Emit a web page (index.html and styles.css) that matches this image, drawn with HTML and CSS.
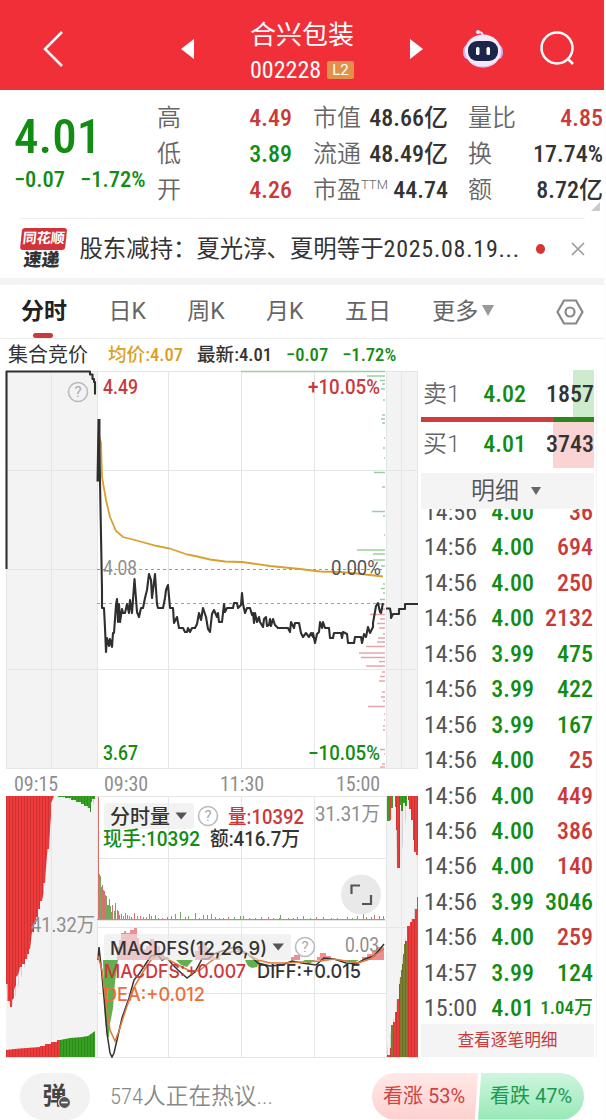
FILE: index.html
```html
<!DOCTYPE html>
<html lang="zh-CN">
<head>
    <meta charset="UTF-8">
    <title>合兴包装 002228</title>
    <link rel="stylesheet" href="styles.css">
</head>
<body>
<div class="app">
    <header class="topbar">
        <svg class="back" width="24" height="38" viewBox="0 0 24 38"><path d="M21 2L4 19L21 36"/></svg>
        <svg class="prev" width="14" height="20" viewBox="0 0 14 20"><path d="M0 10L13 0V20Z"/></svg>
        <div class="stock">
            <h1>合兴包装</h1>
            <p><span class="num">002228</span><b>L2</b></p>
        </div>
        <svg class="next" width="14" height="20" viewBox="0 0 14 20"><path d="M13 10L0 0V20Z"/></svg>
        <svg class="robot" width="42" height="40" viewBox="0 0 42 40">
            <path d="M21 8Q21 3 17 3" fill="none" stroke="#f6dcf0" stroke-width="2"/>
            <circle cx="16" cy="3" r="2" fill="#f6e9fb"/>
            <ellipse cx="5" cy="23" rx="4" ry="7" fill="#c9b4f3"/>
            <ellipse cx="37" cy="23" rx="4" ry="7" fill="#c9b4f3"/>
            <ellipse cx="21" cy="22" rx="18" ry="16.5" fill="#f3eafc"/>
            <path d="M8 32Q21 43 34 32Q28 38 21 38T8 32" fill="#c3a5ee"/>
            <rect x="6" y="12" width="30" height="20" rx="9" fill="#1c2649"/>
            <rect x="14" y="18" width="3.500" height="8" rx="1.500" fill="#fff"/>
            <rect x="24.500" y="18" width="3.500" height="8" rx="1.500" fill="#fff"/>
        </svg>
        <svg class="search" width="36" height="36" viewBox="0 0 36 36"><circle cx="17" cy="17" r="15.500"/><path d="M28 28L33 33"/></svg>
    </header>

    <section class="quote">
        <div class="price">
            <strong class="num">4.01</strong>
            <p><span class="num">−0.07</span><span class="num">−1.72%</span></p>
        </div>
        <dl class="col1">
            <div><dt>高</dt><dd class="num red">4.49</dd></div>
            <div><dt>低</dt><dd class="num green">3.89</dd></div>
            <div><dt>开</dt><dd class="num red">4.26</dd></div>
        </dl>
        <dl class="col2">
            <div><dt>市值</dt><dd class="num">48.66亿</dd></div>
            <div><dt>流通</dt><dd class="num">48.49亿</dd></div>
            <div><dt>市盈<sup>TTM</sup></dt><dd class="num">44.74</dd></div>
        </dl>
        <dl class="col3">
            <div><dt>量比</dt><dd class="num red">4.85</dd></div>
            <div><dt>换</dt><dd class="num">17.74%</dd></div>
            <div><dt>额</dt><dd class="num">8.72亿</dd></div>
        </dl>
        <i class="corner"></i>
    </section>

    <section class="news">
        <div class="tag"><span>同花顺</span><em>速递</em></div>
        <p>股东减持：夏光淳、夏明等于<span class="num">2025.08.19...</span></p>
        <i class="dot"></i>
        <svg width="14" height="14" viewBox="0 0 14 14"><path d="M1 1L13 13M13 1L1 13"/></svg>
    </section>

    <nav class="tabs">
        <a class="active">分时</a>
        <a>日K</a>
        <a>周K</a>
        <a>月K</a>
        <a>五日</a>
        <a>更多<svg width="12" height="11" viewBox="0 0 12 11"><path d="M0 0H12L6 11Z" fill="#999"/></svg></a>
        <svg class="gear" width="28" height="26" viewBox="0 0 28 26"><path d="M8 1.500H20L26.500 13L20 24.500H8L1.500 13Z"/><circle cx="14" cy="13" r="4.500"/></svg>
    </nav>

    <div class="info">
        <b>集合竞价</b>
        <span class="avg">均价:4.07</span>
        <span>最新:4.01</span>
        <span class="green">−0.07</span>
        <span class="green">−1.72%</span>
    </div>

    <main class="board">
        <div class="charts">
            <svg width="418" height="399" viewBox="0 370 418 399">
                <path class="shade" d="M6 371H97V769H6ZM386 371H418V769H386Z"/>
                <path class="grid" d="M6 371.500H418M6 470.500H418M6 569.500H97M6 669.500H418M6 768.500H418M6.500 371V769M51.500 371V769M97.500 371V769M168.500 371V769M241.500 371V769M314.500 371V769M386.500 371V769M401.500 371V769M417.500 371V769"/>
                <path class="dash" d="M97 569.500H385"/>
                <path class="dash now" d="M97 603.500H385"/>
                <!-- 卖盘 / 买盘 分布 -->
                <path class="sell" d="M241 371.500H385M367 376H385M380 380.500H385M382 384H385M381 389H385M383 400H385M382 415H385M381 419H385M382 423H385M384 438H385M383 448H385M384 458H385M374 472.500H385M382 487H385M372 511.500H385M383 516H385M384 535H385M357 550H385M373 554H385M373 560H385M381 566H385M383 584H385M381 588.500H385M383 593H385M380 599.500H385"/>
                <path class="buy" d="M376 604H385M382 609H385M370 614.500H385M380 619H385M377 623.500H385M379 628H385M383 634H385M378 638H385M377 642H385M366 646.500H385M359 653H385M361 657.500H385M379 661.500H385M366 666H385M382 672H385M380 676.500H385M379 681H385M382 692H385M381 697H385M383 701H385M368 706.500H385M384 714H385M384 720H385M383 726H385M383 730H385M380 749.500H385M384 754H385M382 764H385M380 767H385"/>
                <path class="avgline" d="M99 436L101 443L102 477L106 500L110 517L116 531L123 537L133 539.500L157 546L170 548.500L187 554.500L195 556L210 559.500L225 561.500L242 562L270 566L300 569L320 571.500L340 572L352 573L383 576.500"/>
                <path class="priceline" d="M6.500 569V371.500H90V374.500H92.500V379H94V382H95V394.500"/>
                <path class="priceline first" d="M98 481.500L99 419"/>
                <path class="priceline" d="M99 419L100 481L102 590V608H104L105 628L106 652L107 638L109 646L110 639L112 647L113 633H114L116 605L117 599L118 622L119 604L120 622L122 609L123 613H125L127 604L129 613L130 600L132 613L134.500 579L137 612L139 617L141 608H143L145 598L147 590L149 574L151 580L152 598L155 574L157 604L158 608H163L165 598L166 590L168 585L170 608H173L174 623L177 617L179 628H183L185 632H187L188 628L190 632L192 628H195L197 624L199 613L201 620L203 608L206 617L208 629L210 632L212 614L214 610L217 617L218 613L219 622H222L224 604L225 612L227 608H233L234 603H237L238 608L241 605L242 593L243 604L245 613L247 608H250L252 615L253 613L254 623L255 613L257 622L259 617L260 622L263 627L264 619L266 617L267 626L269 625L270 619L271 626L273 619L275 625L278 628H288L290 632L291 622L294 628L295 623H299L301 633L303 637L306 633L309 637L311 633L313 637V633L315 643L317 634L319 632L320 622L322 628L323 622L325 628H329L330 638H333L334 633H341L342 638L343 632L347 634L348 643H354L355 637H361L362 643L364 634L366 637L368 627L370 633L373 627V623L376 606L378 603L380 612L381 613L383 603"/>
                <path class="priceline" d="M386 608.500H390L391 614V618L393 614H399V609H405V604H418"/>
                <circle class="help" cx="78" cy="392" r="9.500"/>
                <text class="helpmark" x="78" y="397">?</text>
                <text class="red" x="103" y="394" textLength="35" lengthAdjust="spacingAndGlyphs">4.49</text>
                <text class="grey" x="103" y="575" textLength="34" lengthAdjust="spacingAndGlyphs">4.08</text>
                <text class="green" x="103" y="760" textLength="35" lengthAdjust="spacingAndGlyphs">3.67</text>
                <text class="red" x="308" y="394" textLength="72" lengthAdjust="spacingAndGlyphs">+10.05%</text>
                <text class="zero" x="331" y="575" textLength="50" lengthAdjust="spacingAndGlyphs">0.00%</text>
                <text class="green" x="308" y="760" textLength="72" lengthAdjust="spacingAndGlyphs">−10.05%</text>
            </svg>
            <div class="times"><span>09:15</span><span>09:30</span><span>11:30</span><span>15:00</span></div>
            <svg width="418" height="262" viewBox="0 796 418 262">
                <defs>
                    <pattern id="bars" width="3" height="10" patternUnits="userSpaceOnUse"><rect width="1" height="10" fill="#000" opacity=".13"/></pattern>
                </defs>
                <path class="shade" d="M6 796H97V1058H6ZM386 796H418V1058H386Z"/>
                <path class="grid" d="M6 796.500H418M97 858.500H386M97 920.500H386M97 927.500H418M97 993.500H386M6 1057.500H418M51.500 796V1058M97.500 796V1058M168.500 796V1058M241.500 796V1058M314.500 796V1058M386.500 796V1058M401.500 796V1058M417.500 796V1058"/>
                <!-- 集合竞价量 -->
                <path class="up" d="M6 796H54L51 803V815L50 830L49 849H47.500L46 868L45 883H43.500V893L42 901H40V909H38V917H36V924H34V932H32L30 949H29V954H27V959H25V964H22V967H20L18 975L16 977V985L14 990V998L12 1000V1007H10V1001H7.500V984H6Z"/>
                <path class="down" d="M58 796H95V799H92V802H91V812H90V808H88V806H84V804H81V802H76V800H71V798H65V797H58Z"/>
                <path class="up" d="M6 1057V1050L14 1049L26 1048L40 1047V1046H45V1044H51V1042H57V1040H60V1057Z"/>
                <path class="down" d="M60 1057V1040L70 1038L82 1037L88 1036L91 1034L95 1031V1057Z"/>
                <path fill="url(#bars)" d="M6 796H54L51 803L47.500 850L43 893L29 953L12 1007H10L6 984ZM58 796H95V799L91 812L84 804ZM6 1057V1050L40 1047L60 1040L88 1036L95 1031V1057Z"/>
                <!-- 分时量 -->
                <path class="vol redvol" d="M98.500 797V920M102.500 885V920M104.500 891V920M107.500 905V920M109.500 899V920M112.500 905V920M115.500 903V920M118.500 911V920M121.500 914V920M127.500 915V920M131.500 917V920M134.500 913V920M140.500 916V920M146.500 917V920M155.500 915V920M162.500 918V920M171.500 916V920M185.500 917V920M195.500 913V920M203.500 915V920M211.500 914V920M219.500 918V920M228.500 917V920M243.500 916V920M255.500 918V920M268.500 917V920M279.500 918V920M293.500 918V920M303.500 916V920M316.500 917V920M331.500 918V920M347.500 917V920M357.500 916V920M366.500 917V920M374.500 915V920M383.500 916V920"/>
                <path class="vol" d="M99.500 874V920M100.500 876V920M101.500 887V920M103.500 890V920M105.500 895V920M106.500 896V920M108.500 905V920M110.500 906V920M111.500 912V920M114.500 911V920M117.500 910V920M119.500 915V920M123.500 916V920M125.500 913V920M129.500 916V920M137.500 916V920M143.500 917V920M149.500 914V920M151.500 916V920M158.500 918V920M167.500 917V920M175.500 914V920M180.500 912V920M188.500 916V920M199.500 918V920M207.500 915V920M215.500 917V920M223.500 918V920M234.500 917V920M240.500 916V920M249.500 918V920M261.500 917V920M273.500 918V920M280.500 915V920M288.500 918V920M297.500 917V920M310.500 918V920M323.500 917V920M337.500 918V920M352.500 918V920M363.500 914V920M371.500 917V920M379.500 916V920"/>
                <path class="volbase" d="M97 919.500H385"/>
                <!-- MACD -->
                <path class="hist-red" d="M117 960V947H119V940H121V933H124V931H126V933H130V930H134V928H137V938H139V944H142V949H146V946H150V939H154V942H157V946H160V953H164V960ZM195 960V951H198V946H201V942H207V948H210V952H214V957H220V960ZM291 960V957H294V955H300V960ZM317 960V957H320V953H326V956H331V960ZM362 960V957H367V954H372V952H376V947H384V960Z"/>
                <path class="hist-green" d="M103 960H118L115 982L113 1008L110 1024L109 1037H107L105 1020ZM176 960H193L187 967L181 965ZM245 960H260L257 967L252 968L248 966ZM303 960H315L309 964ZM340 960H359L354 963L349 962Z"/>
                <path class="diff" d="M98 960L99 947L101 965L104 998L107 1033L110 1053L112 1057L114 1053L117 1040L122 1018L129 998L134 980L139 974L145 965L151 956L158 955L162 960L167 958L172 964L178 970L187 978L195 972L202 959L208 959L214 954L222 951L234 947L248 954L258 963L270 966L282 965L292 961L302 963L316 965L324 958L334 959L346 963L356 964L365 959L374 956L380 949L384 944"/>
                <path class="dea" d="M98 956L102 970L106 1002L110 1030L115 1041L119 1031L125 1012L133 989L143 972L151 960L159 954L169 960L180 966L192 972L200 970L210 962L222 954L236 951L248 954L258 960L270 963L285 963L302 962L320 961L334 959L346 961L358 963L370 959L378 953L384 949"/>
                <!-- 盘后 -->
                <path class="down" d="M387 796H390V821H387ZM391 796H393V808H391ZM400 796H407V806H405V803H403V811H401V805H400Z"/>
                <path class="up" d="M389 796H391V820H389ZM395 796H400V868H397V830H396V807H395ZM408 796H418V855H416V852H414V840H413V820H411V809H409V800H408Z"/>
                <path class="up" d="M387 1057V1055H390V1048H391V1029H393V1022H395V1012H397V999H399V984H401V970H403V954H405V941H407V926H410V922H412V919H415V909H417V897H418V1057Z"/>
                <path class="mix" d="M391 1057V1025H394V1057ZM400 1057V977H402V964H404V944H407V1057Z"/>
                <path fill="url(#bars)" d="M387 1057V1050L395 1012L405 940L417 900V1057ZM395 796H418V850H414V835L408 800L400 868H397Z"/>

                <rect class="label" x="104" y="803" width="90" height="26" rx="3"/>
                <text class="dark" x="110" y="824" textLength="60" lengthAdjust="spacingAndGlyphs">分时量</text>
                <path fill="#555" d="M175.500 812.500H187L181.200 819.500Z"/>
                <circle class="help" cx="208" cy="816" r="9.500"/>
                <text class="helpmark" x="208" y="821">?</text>
                <text class="red" x="228" y="824" textLength="76" lengthAdjust="spacingAndGlyphs">量:10392</text>
                <text class="grey" x="315" y="821" textLength="65" lengthAdjust="spacingAndGlyphs">31.31万</text>
                <text class="green" x="103" y="846" textLength="97" lengthAdjust="spacingAndGlyphs">现手:10392</text>
                <text class="dark" x="210" y="846" textLength="90" lengthAdjust="spacingAndGlyphs">额:416.7万</text>
                <text class="grey" x="31" y="932" textLength="64" lengthAdjust="spacingAndGlyphs">41.32万</text>
                <circle cx="361" cy="894.500" r="20" fill="#e9e9e9"/>
                <path d="M351.500 894V885.500H360M371 895V904H362" fill="none" stroke="#555" stroke-width="2.200"/>
                <rect class="label" x="104" y="934" width="187" height="26" rx="3"/>
                <text class="dark wide" x="110" y="955" textLength="157" lengthAdjust="spacingAndGlyphs">MACDFS(12,26,9)</text>
                <path fill="#555" d="M272.500 943.500H284L278.200 950.500Z"/>
                <circle class="help" cx="305" cy="947" r="9.500"/>
                <text class="helpmark" x="305" y="952">?</text>
                <text class="grey" x="345" y="952" textLength="34" lengthAdjust="spacingAndGlyphs">0.03</text>
                <text class="red wide" x="104" y="978" textLength="142" lengthAdjust="spacingAndGlyphs">MACDFS:+0.007</text>
                <text class="dark wide" x="257" y="978" textLength="104" lengthAdjust="spacingAndGlyphs">DIFF:+0.015</text>
                <text class="orange wide" x="104" y="1001" textLength="101" lengthAdjust="spacingAndGlyphs">DEA:+0.012</text>
            </svg>
        </div>

        <aside class="book">
            <div class="level sell1"><span>卖1</span><b class="num green">4.02</b><b class="num">1857</b></div>
            <div class="ratio"><i></i></div>
            <div class="level buy1"><span>买1</span><b class="num green">4.01</b><b class="num">3743</b></div>
            <div class="detail">明细<svg width="10" height="8" viewBox="0 0 10 8"><path d="M0 0H10L5 8Z" fill="#666"/></svg></div>
            <ul class="trades">
                <li><span class="num">14:56</span><b class="num green">4.00</b><b class="num red">36</b></li>
                <li><span class="num">14:56</span><b class="num green">4.00</b><b class="num red">694</b></li>
                <li><span class="num">14:56</span><b class="num green">4.00</b><b class="num red">250</b></li>
                <li><span class="num">14:56</span><b class="num green">4.00</b><b class="num red">2132</b></li>
                <li><span class="num">14:56</span><b class="num green">3.99</b><b class="num green">475</b></li>
                <li><span class="num">14:56</span><b class="num green">3.99</b><b class="num green">422</b></li>
                <li><span class="num">14:56</span><b class="num green">3.99</b><b class="num green">167</b></li>
                <li><span class="num">14:56</span><b class="num green">4.00</b><b class="num red">25</b></li>
                <li><span class="num">14:56</span><b class="num green">4.00</b><b class="num red">449</b></li>
                <li><span class="num">14:56</span><b class="num green">4.00</b><b class="num red">386</b></li>
                <li><span class="num">14:56</span><b class="num green">4.00</b><b class="num red">140</b></li>
                <li><span class="num">14:56</span><b class="num green">3.99</b><b class="num green">3046</b></li>
                <li><span class="num">14:56</span><b class="num green">4.00</b><b class="num red">259</b></li>
                <li><span class="num">14:57</span><b class="num green">3.99</b><b class="num green">124</b></li>
                <li><span class="num">15:00</span><b class="num green">4.01</b><b class="num green small">1.04万</b></li>
            </ul>
            <a class="more">查看逐笔明细</a>
        </aside>
    </main>

    <footer class="bottom">
        <div class="danmu">弹<svg width="13" height="13" viewBox="0 0 12 12"><circle cx="6" cy="6" r="5.500" fill="#555" stroke="#f2f2f2"/><path d="M3 6H9" stroke="#fff" stroke-width="1.500"/></svg></div>
        <p>574人正在热议...</p>
        <div class="vote">
            <span class="bull">看涨 53%</span>
            <span class="bear">看跌 47%</span>
        </div>
    </footer>
</div>
</body>
</html>
```
FILE: styles.css
```css
* {
    box-sizing: border-box;
    margin: 0;
    padding: 0;
}
body {
    width: 606px;
    height: 1120px;
    overflow: hidden;
    background: #fdfdfd;
    font-family: Roboto, "Noto Sans CJK SC", sans-serif;
    color: #333;
}
.app {
    width: 604px;
    height: 1120px;
    background: #fff;
}
.num {
    font-stretch: 75%;
    font-weight: 500;
}
.red { color: #c93a3a; fill: #c93a3a; }
.green { color: #128c12; fill: #128c12; }
.grey { fill: #8e8e8e; }
.dark { fill: #333; }
.orange { fill: #e8713a; }

/* top bar */
.topbar {
    display: flex;
    align-items: center;
    height: 90px;
    padding: 8px 28px 0 41px;
    background: #f12f38;
    color: #fff;
}
.topbar svg { flex: none; }
.back path, .search * { fill: none; stroke: #fff; stroke-width: 2.5; }
.prev { margin-left: 116px; fill: #fff; }
.next { margin-left: 56px; fill: #fff; }
.robot { margin-left: 38px; }
.search { margin-left: 36px; }
.stock {
    width: 104px;
    margin-left: 55px;
    padding-top: 7px;
}
.stock h1 {
    font-size: 26px;
    font-weight: 400;
    line-height: 35px;
}
.stock p {
    display: flex;
    align-items: center;
    justify-content: space-between;
    height: 34px;
    font-size: 24px;
}
.stock .num { font-weight: 400; }
.stock b {
    width: 27px;
    height: 18px;
    border-radius: 2px;
    background: #e2914a;
    font-size: 15px;
    font-weight: 400;
    line-height: 18px;
    text-align: center;
}

/* quote */
.quote {
    position: relative;
    display: flex;
    height: 128px;
    padding: 10px 1px 0 14px;
}
.price {
    width: 143px;
    color: #128c12;
}
.price strong {
    display: block;
    height: 70px;
    font-size: 49px;
    line-height: 73px;
}
.price p {
    display: flex;
    gap: 15px;
    font-size: 22.5px;
    line-height: 19px;
    white-space: nowrap;
}
.quote dl div {
    display: flex;
    justify-content: space-between;
    height: 36px;
    font-size: 24px;
    line-height: 36px;
    white-space: nowrap;
}
.quote dt { color: #666; font-weight: 350; }
.quote sup {
    font-size: 13px;
    line-height: 10px;
}
.col1 { width: 135px; }
.col2 { width: 135px; margin-left: 21px; }
.col3 { width: 135px; margin-left: 20px; }
.corner {
    position: absolute;
    right: 4px;
    bottom: 7px;
    border-bottom: 9px solid #ccc;
    border-left: 9px solid transparent;
}

/* news */
.news {
    display: flex;
    align-items: center;
    height: 60px;
    margin: 0 19px 0 20px;
    border-top: 1px solid #eee;
    font-size: 23.4px;
}
.tag {
    width: 49px;
    margin-right: 14px;
    text-align: center;
    transform: skewX(-6deg);
}
.tag span {
    display: block;
    height: 22px;
    border-radius: 3px;
    background: #d3323b;
    color: #fff;
    font-size: 14px;
    font-weight: 700;
    line-height: 21px;
}
.tag em {
    display: block;
    font-size: 18px;
    font-weight: 900;
    line-height: 20px;
    font-style: normal;
}
.news p {
    width: 442px;
    padding-bottom: 3px;
    white-space: nowrap;
}
.news .num {
    font-size: 24px;
    font-weight: 400;
    letter-spacing: .75px;
}
.dot {
    width: 10px;
    height: 10px;
    margin: 0 26px 0 16px;
    border-radius: 50%;
    background: #d93434;
}
.news svg { flex: none; stroke: #999; stroke-width: 1.6; }

/* tabs */
.tabs {
    display: flex;
    align-items: center;
    height: 61px;
    padding: 0 20px 0 21px;
    border-top: 7px solid #f3f3f3;
    border-bottom: 1px solid #eef0f0;
    color: #666;
    font-size: 23px;
}
.tabs a {
    height: 53px;
    margin-right: 41.4px;
    line-height: 54px;
    white-space: nowrap;
}
.tabs .active {
    position: relative;
    color: #222;
    font-weight: 700;
}
.tabs .active::after {
    content: "";
    position: absolute;
    left: 12px;
    bottom: 0;
    width: 20px;
    height: 5px;
    border-radius: 3px;
    background: #c93a3a;
}
.tabs a svg { margin-left: 4px; vertical-align: 3px; }
.gear { margin-left: auto; fill: none; stroke: #888; stroke-width: 2.2; }

.info {
    display: flex;
    gap: 14px;
    height: 31px;
    padding-left: 8px;
    font-size: 18.6px;
    font-stretch: 75%;
    font-weight: 500;
    line-height: 33px;
}
.info b { font-size: 20px; font-weight: 400; }
.info .avg { margin-left: 6px; color: #dc9f22; }

/* board */
.board { display: flex; height: 688px; }
.charts { width: 418px; }
.charts svg { display: block; }
.charts text { font-size: 20px; font-weight: 500; }
.charts .grey { font-weight: 400; }
.charts .zero { fill: #555; font-weight: 400; }
.charts .wide { font-family: Inter, sans-serif; font-size: 19px; }
.shade { fill: #f3f3f3; }
.grid { stroke: #e5e7e7; fill: none; }
.dash { stroke: #999; stroke-dasharray: 3 3; }
.now { stroke: #b39a8c; }
.sell { stroke: #9ccf9f; stroke-width: 1.3; }
.buy { stroke: #e5a5a8; stroke-width: 1.3; }
.avgline { fill: none; stroke: #d9a02c; stroke-width: 1.8; }
.priceline { fill: none; stroke: #2f2f2f; stroke-width: 2.1; stroke-linejoin: round; }
.first { stroke-width: 3; }
.help { fill: none; stroke: #bbb; stroke-width: 1.6; }
.charts .helpmark { fill: #aaa; font-size: 15px; font-weight: 400; text-anchor: middle; }
.times {
    display: flex;
    height: 27px;
    padding-left: 14px;
    color: #8e8e8e;
    font-size: 20px;
    font-stretch: 75%;
    line-height: 31px;
}
.times span { width: 46px; }
.times span:nth-child(2) { margin-left: 44px; }
.times span:nth-child(3) { margin-left: 70px; }
.times span:nth-child(4) { margin-left: 70px; }
.up { fill: #ee3a3a; }
.down { fill: #36a023; }
.mix { fill: #7c7d2f; }
.vol { stroke: #74a860; }
.redvol { stroke: #d9706c; }
.volbase { stroke: #a99a7c; }
.hist-red { fill: #ee8e93; }
.hist-green { fill: #62b04d; }
.diff { fill: none; stroke: #333; stroke-width: 1.5; }
.dea { fill: none; stroke: #e07a3e; stroke-width: 1.5; }
.label { fill: #eaeaea; opacity: .62; }

/* order book */
.book {
    width: 179px;
    padding: 0 2px 0 3px;
    border-right: 1px solid #f4f4f4;
    font-size: 24px;
}
.book b { text-align: right; }
.level {
    display: grid;
    grid-template-columns: 60px 43px 1fr;
    height: 47px;
    padding-left: 2px;
    line-height: 49px;
}
.level span { color: #666; font-weight: 350; }
.sell1 { background: linear-gradient(#cdebcd, #cdebcd) right / 21px 100% no-repeat; }
.buy1 {
    height: 46px;
    line-height: 45px;
    background: linear-gradient(#fad4d5, #fad4d5) right / 41px 100% no-repeat;
}
.ratio { height: 5px; background: #2b861c; }
.ratio i { display: block; width: 133px; height: 5px; background: #d23b3b; }
.detail {
    height: 36px;
    margin-top: 5px;
    padding-left: 50px;
    background: #f4f4f4;
    color: #555;
    font-weight: 350;
    line-height: 36px;
}
.detail svg { margin-left: 12px; vertical-align: 4px; }
.trades {
    height: 515px;
    overflow: hidden;
    list-style: none;
}
.trades li {
    display: grid;
    grid-template-columns: 51px 59px 1fr;
    height: 35.45px;
    padding: 0 1px 0 3px;
    line-height: 36px;
    white-space: nowrap;
}
.trades li:first-child { margin-top: -15px; }
.trades span { color: #555; font-weight: 400; }
.trades .small { font-size: 19px; }
.more {
    display: block;
    height: 33px;
    background: #f4f4f4;
    color: #c93a3a;
    font-size: 16.7px;
    line-height: 33px;
    text-align: center;
}

/* bottom bar */
.bottom {
    display: flex;
    align-items: center;
    height: 62px;
    padding: 14px 20px 0;
    font-size: 22.7px;
}
.danmu {
    display: flex;
    align-items: center;
    justify-content: center;
    width: 70px;
    height: 47px;
    padding: 0 0 5px 3px;
    border-radius: 24px;
    background: #f2f2f2;
    color: #444;
    font-size: 24px;
    font-weight: 700;
}
.danmu svg { align-self: flex-end; margin: 0 0 6px -9px; }
.bottom p {
    margin-left: 20px;
    padding-bottom: 3px;
    color: #888;
    font-stretch: 75%;
    font-weight: 350;
}
.vote {
    display: flex;
    width: 212px;
    height: 47px;
    margin-left: auto;
    font-size: 20px;
    line-height: 46px;
}
.vote span { width: 106px; }
.bull {
    padding-left: 11px;
    border-radius: 24px 0 0 24px;
    background: linear-gradient(#ffe9e7, #fdd0ce);
    clip-path: polygon(0 0, 100% 0, 97% 100%, 0 100%);
    color: #d14343;
}
.bear {
    padding-left: 12px;
    border-radius: 0 24px 24px 0;
    background: linear-gradient(#cff5de, #98e8b8);
    clip-path: polygon(3% 0, 100% 0, 100% 100%, 0 100%);
    color: #1d9a50;
}
```
